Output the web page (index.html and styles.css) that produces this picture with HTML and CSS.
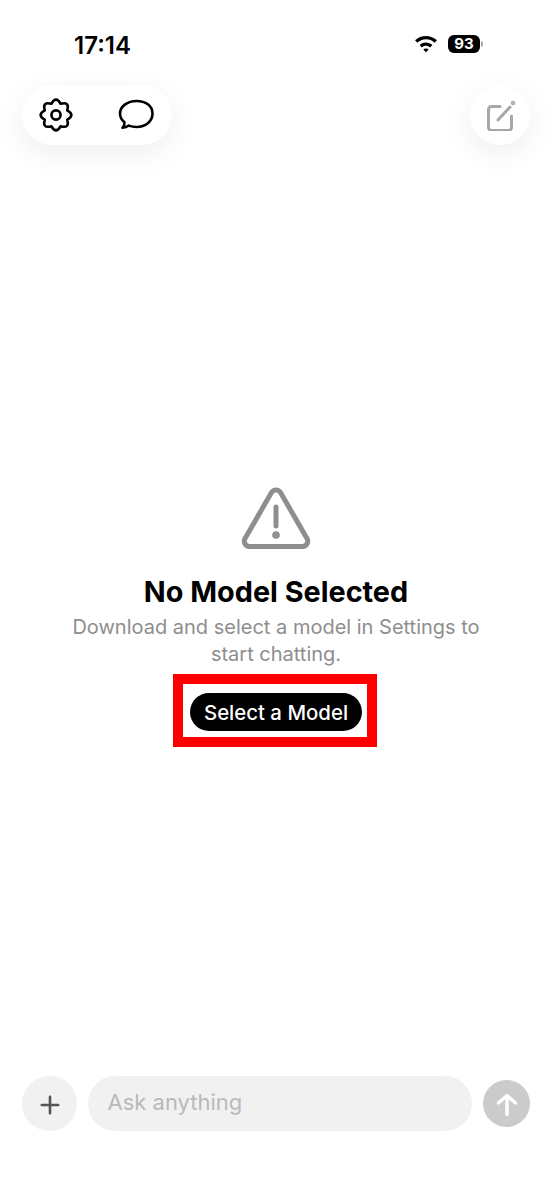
FILE: index.html
```html
<!DOCTYPE html>
<html lang="en">
<head>
  <meta charset="UTF-8">
  <title>Chat</title>
  <link rel="stylesheet" href="styles.css">
</head>
<body>
  <div class="app">

    <div class="status-bar">
      <span class="time">17:14</span>
      <div class="status-icons">
        <svg class="wifi" width="28" height="21" viewBox="0 0 24 18">
          <path d="M12 2.500c3.600 0 6.900 1.400 9.400 3.700l-2 2.100A10.800 10.800 0 0 0 12 5.400c-2.800 0-5.400 1.100-7.400 2.900l-2-2.100A13.800 13.800 0 0 1 12 2.500z" fill="#000"/>
          <path d="M12 8.200c2.100 0 4 .8 5.500 2.100l-2 2.100A5.300 5.300 0 0 0 12 11c-1.300 0-2.600.5-3.500 1.400l-2-2.100A8 8 0 0 1 12 8.200z" fill="#000"/>
          <path d="M12 13.300c.9 0 1.700.3 2.300.9L12 16.600l-2.300-2.400c.6-.6 1.400-.9 2.300-.9z" fill="#000"/>
        </svg>
        <div class="battery"><span>93</span></div>
        <div class="battery-nub"></div>
      </div>
    </div>

    <div class="top-bar">
      <div class="pill">
        <button class="icon-btn">
          <svg width="36" height="36" viewBox="-1 -1 34 34" fill="none" stroke="#000" stroke-width="2.500" stroke-linejoin="round">
            <path d="M26.620 11.600Q34.400 16 26.620 20.400Q29.010 29.010 20.400 26.620Q16 34.400 11.600 26.620Q2.990 29.010 5.380 20.400Q-2.400 16 5.380 11.600Q2.990 2.990 11.600 5.380Q16 -2.400 20.400 5.380Q29.010 2.990 26.620 11.600Z"/>
            <circle cx="16" cy="16" r="4.300"/>
          </svg>
        </button>
        <button class="icon-btn">
          <svg width="38" height="34" viewBox="0 0 38 34" fill="none" stroke="#000" stroke-width="2.600" stroke-linejoin="round">
            <path d="M19.500 3C10.500 3 3 8.500 3 15.500c0 3.500 1.700 6.500 4.500 8.800.2 1.800-.6 3.900-2 5.500 2.500 0 4.700-.9 6.300-2.200 2.300.9 5 1.400 7.700 1.400 9 0 16-5.500 16-13.500S28.500 3 19.500 3z"/>
          </svg>
        </button>
      </div>
      <button class="round-btn">
        <svg width="32" height="32" viewBox="0 -2 32 32" fill="none" stroke="#a8a8a8" stroke-width="3" stroke-linecap="round" stroke-linejoin="round">
          <path d="M16 5.500H7.500a3 3 0 0 0-3 3v18a3 3 0 0 0 3 3h17a3 3 0 0 0 3-3V15"/>
          <path d="M14 19 26 6"/>
          <circle cx="29" cy="2" r=".8" fill="#a8a8a8"/>
        </svg>
      </button>
    </div>

    <div class="empty-state">
      <svg class="warning" width="70" height="64" viewBox="0 0 70 64" fill="none" stroke="#8e8e8e" stroke-width="5" stroke-linecap="round" stroke-linejoin="round">
        <path d="M30.500 6.500 4 52.500c-2 3.600.5 8 4.500 8h53c4 0 6.500-4.400 4.500-8L39.500 6.500c-2-3.500-7-3.500-9 0z"/>
        <path d="M35 21v19"/>
        <circle cx="35" cy="49" r="1.300" fill="#8e8e8e"/>
      </svg>
      <h2>No Model Selected</h2>
      <p>Download and select a model in Settings to start chatting.</p>
      <div class="highlight">
        <button class="select-btn">Select a Model</button>
      </div>
    </div>

    <div class="input-bar">
      <button class="plus-btn">
        <svg width="22" height="22" viewBox="0 0 22 22" stroke="#555" stroke-width="2.600" stroke-linecap="round">
          <path d="M11 3.800v16.400M2.800 12h16.400"/>
        </svg>
      </button>
      <div class="ask-input">Ask anything</div>
      <button class="send-btn">
        <svg width="26" height="30" viewBox="0 0 26 30" fill="none" stroke="#fff" stroke-width="3.400" stroke-linecap="round" stroke-linejoin="round">
          <path d="M13 25.500V6.500M4.500 14 13 6.500l8.500 7.500"/>
        </svg>
      </button>
    </div>

  </div>
</body>
</html>
```

FILE: styles.css
```css
* {
  box-sizing: border-box;
}

body {
  margin: 0;
  background-color: #fff;
  font-family: "Inter", "Liberation Sans", sans-serif;
  color: #000;
}

button {
  border: none;
  padding: 0;
  font-family: inherit;
}

.app {
  display: flex;
  flex-direction: column;
  height: 1200px;
  overflow: hidden;
}

.status-bar {
  display: flex;
  justify-content: space-between;
  align-items: center;
  height: 85px;
  padding: 5px 69px 0 74px;
}

.time {
  font-size: 24px;
  font-weight: 600;
}

.status-icons {
  display: flex;
  align-items: center;
  margin-top: -3px;
}

.wifi {
  margin-right: 8px;
}

.battery {
  display: flex;
  justify-content: center;
  align-items: center;
  width: 32px;
  height: 18px;
  border-radius: 6px;
  background-color: #000;
  color: #fff;
  font-size: 15px;
  font-weight: 700;
}

.battery-nub {
  width: 2px;
  height: 6px;
  margin-left: 1px;
  border-radius: 0 2px 2px 0;
  background-color: #aaa;
}

.top-bar {
  display: flex;
  justify-content: space-between;
  padding: 0 22px;
}

.pill {
  display: flex;
  justify-content: space-between;
  align-items: center;
  width: 150px;
  height: 60px;
  padding: 0 17px 0 16px;
  border-radius: 30px;
  background-color: #fff;
  box-shadow: 0 8px 30px rgba(0, 0, 0, 0.07);
}

.icon-btn {
  display: flex;
  background: none;
}

.round-btn {
  display: flex;
  justify-content: center;
  align-items: center;
  width: 60px;
  height: 60px;
  border-radius: 50%;
  background-color: #fff;
  box-shadow: 0 8px 30px rgba(0, 0, 0, 0.07);
}

.empty-state {
  flex: 1;
  display: flex;
  flex-direction: column;
  align-items: center;
  padding-top: 341px;
}

.warning {
  display: block;
}

.empty-state h2 {
  margin: 24px 0 0;
  font-size: 28.800px;
  font-weight: 700;
  line-height: 36px;
}

.empty-state p {
  width: 420px;
  margin: 4px 0 0;
  font-size: 20px;
  line-height: 27px;
  text-align: center;
  color: #8e8e8e;
}

.highlight {
  margin: 6px 2px 0 0;
  padding: 9px 5px 6px 7px;
  border: 10px solid #ff0000;
}

.select-btn {
  display: block;
  width: 172px;
  height: 38px;
  border-radius: 19px;
  background-color: #000;
  color: #fff;
  font-size: 20.400px;
  font-weight: 500;
}

.input-bar {
  display: flex;
  align-items: center;
  gap: 11px;
  height: 55px;
  margin-bottom: 69px;
  padding: 0 22px;
}

.plus-btn {
  display: flex;
  justify-content: center;
  align-items: center;
  flex: none;
  width: 55px;
  height: 55px;
  border-radius: 50%;
  background-color: #f1f1f1;
}

.ask-input {
  flex: 1;
  height: 55px;
  padding-left: 19.500px;
  border-radius: 27px;
  background-color: #f1f1f1;
  color: #b9b9b9;
  font-size: 22px;
  line-height: 52px;
}

.send-btn {
  display: flex;
  justify-content: center;
  align-items: center;
  flex: none;
  width: 47px;
  height: 47px;
  border-radius: 50%;
  background-color: #cbcbcb;
}
```
